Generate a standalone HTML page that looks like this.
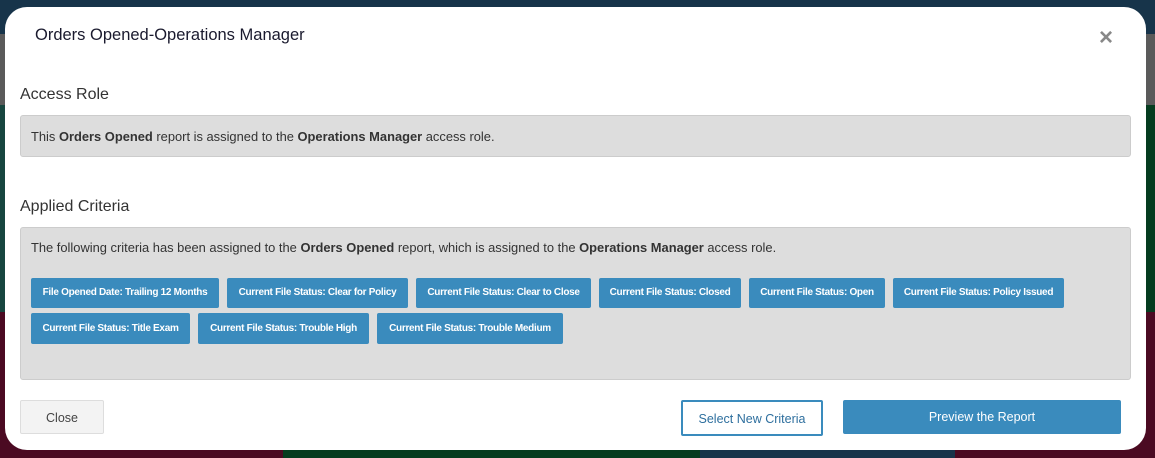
<!DOCTYPE html>
<html><head><style>
*{box-sizing:border-box;margin:0;padding:0}
body{width:1155px;height:458px;overflow:hidden;position:relative;background:#17344a;font-family:"Liberation Sans",sans-serif}
.bg{position:absolute}
.m{position:absolute;left:5px;top:7px;width:1141px;height:443px;background:#fff;border-radius:22px}
.t{position:absolute;left:35px;top:26px;font-size:16.5px;color:#1a1a2e}
.x{position:absolute;left:1099px;top:27px;font-size:24px;color:#888;font-weight:bold;line-height:22px}
.h{position:absolute;left:20px;font-size:16px;color:#333}
.box{position:absolute;left:20px;width:1111px;background:#ddd;border:1px solid #ccc;border-radius:3px}
.p{position:absolute;left:31px;font-size:12.9px;color:#333}
.b{position:absolute;height:30px;background:#3a8bbd;color:#fff;border-radius:2px;font-size:10px;font-weight:bold;text-align:center;line-height:30px;white-space:nowrap;letter-spacing:-0.3px}
.btn{position:absolute;top:400px;height:34px;border-radius:2px;font-size:12.5px;text-align:center;line-height:34px}
</style></head><body>
<div class="bg" style="left:0;top:34px;width:1155px;height:71px;background:#5a5a5a"></div>
<div class="bg" style="left:0;top:105px;width:1155px;height:207px;background:#17463f"></div>
<div class="bg" style="left:1140px;top:105px;width:15px;height:207px;background:#053c1f"></div>
<div class="bg" style="left:0;top:312px;width:1155px;height:146px;background:#4b0a22"></div>
<div class="bg" style="left:283px;top:450px;width:417px;height:8px;background:#053c1f"></div>
<div class="bg" style="left:700px;top:450px;width:255px;height:8px;background:#17344a"></div>
<div class="m"></div>
<div class="t">Orders Opened-Operations Manager</div>
<div class="x">×</div>
<div class="h" style="top:86px">Access Role</div>
<div class="box" style="top:115px;height:42px"></div>
<div class="p" style="top:129px">This <b>Orders Opened</b> report is assigned to the <b>Operations Manager</b> access role.</div>
<div class="h" style="top:198px">Applied Criteria</div>
<div class="box" style="top:227px;height:153px"></div>
<div class="p" style="top:240px">The following criteria has been assigned to the <b>Orders Opened</b> report, which is assigned to the <b>Operations Manager</b> access role.</div>
<div class="b" style="left:31px;top:278px;width:188px">File Opened Date: Trailing 12 Months</div>
<div class="b" style="left:227px;top:278px;width:181px">Current File Status: Clear for Policy</div>
<div class="b" style="left:416px;top:278px;width:175px">Current File Status: Clear to Close</div>
<div class="b" style="left:599px;top:278px;width:142px">Current File Status: Closed</div>
<div class="b" style="left:749px;top:278px;width:136px">Current File Status: Open</div>
<div class="b" style="left:893px;top:278px;width:171px">Current File Status: Policy Issued</div>
<div class="b" style="left:31px;top:313px;width:159px;height:31px;line-height:31px">Current File Status: Title Exam</div>
<div class="b" style="left:198px;top:313px;width:171px;height:31px;line-height:31px">Current File Status: Trouble High</div>
<div class="b" style="left:377px;top:313px;width:186px;height:31px;line-height:31px">Current File Status: Trouble Medium</div>
<div class="btn" style="left:20px;width:84px;background:#f3f3f3;border:1px solid #ddd;color:#444">Close</div>
<div class="btn" style="left:681px;width:142px;height:36px;line-height:34px;border:2px solid #3a8bbd;color:#2e6f9e;background:#fff">Select New Criteria</div>
<div class="btn" style="left:843px;width:278px;background:#3a8bbd;color:#fff">Preview the Report</div>
</body></html>
